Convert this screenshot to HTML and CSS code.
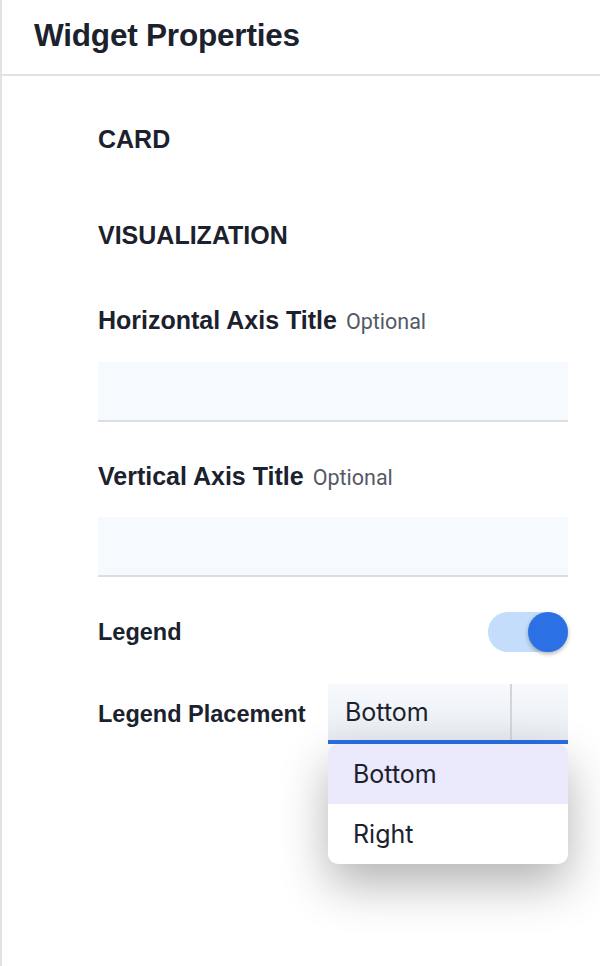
FILE: index.html
```html
<!DOCTYPE html>
<html lang="en">
<head>
<meta charset="utf-8">
<title>Widget Properties</title>
<link rel="stylesheet" href="styles.css">
</head>
<body>
<div class="panel">
  <header class="panel-header">Widget Properties</header>
  <div class="panel-body">
    <div class="section-title card-title">CARD</div>
    <div class="section-title vis-title">VISUALIZATION</div>

    <div class="field first-field">
      <label class="field-label">Horizontal Axis Title <span class="optional">Optional</span></label>
      <div class="text-input first-input"></div>
    </div>

    <div class="field second-field">
      <label class="field-label">Vertical Axis Title <span class="optional">Optional</span></label>
      <div class="text-input"></div>
    </div>

    <div class="row legend-row">
      <span class="row-label">Legend</span>
      <div class="toggle"><div class="knob"></div></div>
    </div>

    <div class="row placement-row">
      <span class="row-label">Legend Placement</span>
      <div class="select-wrap">
        <div class="select">
          <div class="select-value">Bottom</div>
          <div class="select-btn"></div>
        </div>
        <ul class="menu">
          <li class="menu-item active">Bottom</li>
          <li class="menu-item">Right</li>
        </ul>
      </div>
    </div>
  </div>
</div>
</body>
</html>
```

FILE: styles.css
```css
html, body {
  margin: 0;
  padding: 0;
  background: #ffffff;
}

body {
  font-family: "Liberation Sans", Arial, sans-serif;
  color: #1b222d;
}

.panel {
  border-left: 2px solid #e2e2e2;
  min-height: 966px;
  box-sizing: border-box;
}

.panel-header {
  height: 74px;
  line-height: 70px;
  padding-left: 32px;
  font-size: 31.5px;
  font-weight: bold;
  border-bottom: 2px solid #e2e2e2;
  letter-spacing: -0.2px;
}

.panel-body {
  padding: 0 32px 0 96px;
}

.section-title {
  font-size: 25px;
  font-weight: bold;
  line-height: 30px;
}

.card-title {
  margin-top: 48px;
}

.vis-title {
  margin-top: 66px;
}

.field-label {
  display: block;
  font-size: 25px;
  font-weight: bold;
  line-height: 30px;
}

.optional {
  font-family: Roboto, sans-serif;
  font-weight: normal;
  font-size: 21.5px;
  color: #535a66;
  margin-left: 2px;
}

.first-field {
  margin-top: 55px;
}

.second-field {
  margin-top: 39px;
}

.text-input {
  margin-top: 24px;
  height: 58px;
  background: #f6f9fd;
  border-bottom: 2px solid #dcdde0;
}

.first-input {
  margin-top: 25px;
}

.row {
  display: flex;
  align-items: center;
  justify-content: space-between;
}

.row-label {
  font-size: 23.5px;
  font-weight: bold;
}

.legend-row {
  margin-top: 35px;
}

.toggle {
  width: 80px;
  height: 40px;
  border-radius: 20px;
  background: #c3ddfa;
  display: flex;
  justify-content: flex-end;
}

.knob {
  width: 40px;
  height: 40px;
  border-radius: 50%;
  background: #2b71e5;
  box-shadow: 0 2px 4px rgba(0, 0, 0, 0.3);
}

.placement-row {
  margin-top: 32px;
}

.select-wrap {
  position: relative;
  width: 240px;
}

.select {
  display: flex;
  height: 56px;
  background: linear-gradient(#f7f9fd, #e8ecf2);
  border-bottom: 4px solid #2b6fe3;
  font-family: Inter, "Noto Sans", sans-serif;
  font-size: 25px;
  color: #1b222d;
}

.select-value {
  flex: 1;
  display: flex;
  align-items: center;
  padding-left: 17px;
  border-right: 2px solid #d3d5d9;
}

.select-btn {
  width: 56px;
}

.menu {
  position: absolute;
  top: 100%;
  left: 0;
  right: 0;
  margin: 0;
  padding: 0;
  list-style: none;
  background: #ffffff;
  border-radius: 10px;
  overflow: hidden;
  box-shadow: 0 20px 48px rgba(0, 0, 0, 0.3);
  font-family: Inter, "Noto Sans", sans-serif;
  font-size: 25px;
  color: #1b222d;
}

.menu-item {
  height: 60px;
  display: flex;
  align-items: center;
  padding-left: 25px;
}

.menu-item.active {
  background: #ebe9fc;
}
```
